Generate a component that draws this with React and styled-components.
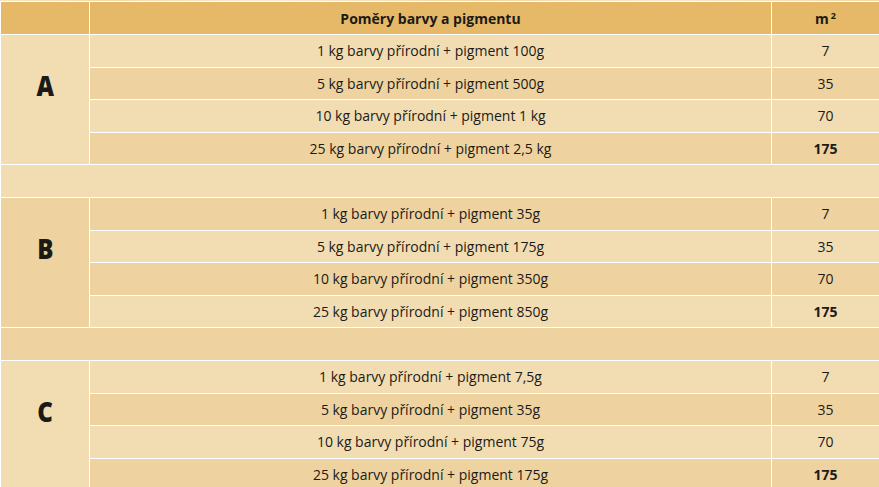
import React from "react";
import styled, { createGlobalStyle } from "styled-components";

const GlobalStyle = createGlobalStyle`
  html, body {
    margin: 0;
    padding: 0;
    background: #ffffff;
    overflow: hidden;
  }
  body {
    font-family: "Open Sans", "DejaVu Sans", sans-serif;
    color: #1c1a17;
  }
`;

const TopEdge = styled.div`
  height: 1px;
  background: linear-gradient(
    90deg,
    #f6e6c6 0%,
    #f1d9ab 12%,
    #f8ecd6 30%,
    #f0d6a6 55%,
    #f7e9cf 75%,
    #f1d8aa 100%
  );
`;

const Table = styled.table`
  width: 880px;
  border-collapse: separate;
  border-spacing: 1px;
  table-layout: fixed;
  font-size: 14px;
`;

const HeadCell = styled.th`
  height: 32px;
  padding: 0;
  background: #e5b968;
  font-weight: 700;
  font-size: 14px;
  text-align: center;
  vertical-align: middle;
`;

const Sup = styled.sup`
  font-size: 9px;
  margin-left: 2px;
  vertical-align: 5px;
  line-height: 0;
`;

const Body = styled.tbody`
  tr:nth-child(odd) td {
    background: #f2ddb3;
  }
  tr:nth-child(even) td {
    background: #eed3a0;
  }
`;

const Cell = styled.td`
  height: 31.6px;
  padding: 0;
  text-align: center;
  vertical-align: middle;
  font-weight: ${(p) => (p.$strong ? 700 : 400)};
`;

const GroupCell = styled.td`
  padding: 0 0 30px;
  text-align: center;
  vertical-align: middle;
  line-height: 1;
`;

const Letter = styled.span`
  display: inline-block;
  font-size: 28px;
  font-weight: 800;
  transform: scaleX(0.86);
`;

const Spacer = styled.td`
  height: 31.6px;
  padding: 0;
`;

const groups = [
  {
    letter: "A",
    rows: [
      ["1 kg barvy přírodní + pigment 100g", "7"],
      ["5 kg barvy přírodní + pigment 500g", "35"],
      ["10 kg barvy přírodní + pigment 1 kg", "70"],
      ["25 kg barvy přírodní + pigment 2,5 kg", "175"],
    ],
  },
  {
    letter: "B",
    rows: [
      ["1 kg barvy přírodní + pigment 35g", "7"],
      ["5 kg barvy přírodní + pigment 175g", "35"],
      ["10 kg barvy přírodní + pigment 350g", "70"],
      ["25 kg barvy přírodní + pigment 850g", "175"],
    ],
  },
  {
    letter: "C",
    rows: [
      ["1 kg barvy přírodní + pigment 7,5g", "7"],
      ["5 kg barvy přírodní + pigment 35g", "35"],
      ["10 kg barvy přírodní + pigment 75g", "70"],
      ["25 kg barvy přírodní + pigment 175g", "175"],
    ],
  },
];

export default function App() {
  return (
    <>
      <GlobalStyle />
      <TopEdge />
      <Table>
        <colgroup>
          <col style={{ width: 88 }} />
          <col style={{ width: 681 }} />
          <col style={{ width: 107 }} />
        </colgroup>
        <thead>
          <tr>
            <HeadCell />
            <HeadCell>Poměry barvy a pigmentu</HeadCell>
            <HeadCell>
              m<Sup>2</Sup>
            </HeadCell>
          </tr>
        </thead>
        <Body>
          {groups.map((g, gi) => (
            <React.Fragment key={g.letter}>
              {gi > 0 && (
                <tr>
                  <Spacer colSpan={3} />
                </tr>
              )}
              {g.rows.map(([mix, area], i) => (
                <tr key={mix}>
                  {i === 0 && (
                    <GroupCell rowSpan={g.rows.length}>
                      <Letter>{g.letter}</Letter>
                    </GroupCell>
                  )}
                  <Cell>{mix}</Cell>
                  <Cell $strong={i === g.rows.length - 1}>{area}</Cell>
                </tr>
              ))}
            </React.Fragment>
          ))}
        </Body>
      </Table>
    </>
  );
}
